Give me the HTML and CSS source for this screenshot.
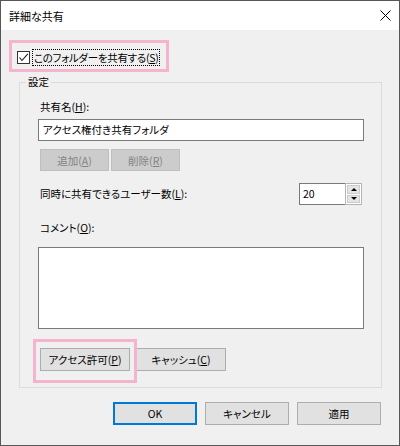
FILE: index.html
```html
<!DOCTYPE html>
<html lang="ja">
<head>
<meta charset="utf-8">
<title>詳細な共有</title>
<link rel="stylesheet" href="styles.css">
</head>
<body>
<div class="window">
  <div class="titlebar">
    <span class="title">詳細な共有</span>
    <span class="close"><svg width="11" height="11" viewBox="0 0 11 11"><path d="M0.5 0.5 L10.5 10.5 M10.5 0.5 L0.5 10.5" stroke="#000" stroke-width="1" fill="none"/></svg></span>
  </div>
  <div class="content">
    <div class="check-row">
      <span class="checkbox"><svg width="11" height="11" viewBox="0 0 11 11"><path d="M1.5 5.5 L4 8.5 L9.8 1.8" stroke="#1a1a1a" stroke-width="1.1" fill="none"/></svg></span>
      <span class="check-label">このフォルダーを共有する(<u>S</u>)</span>
      <span class="highlight hl-check"></span>
    </div>
    <fieldset class="group">
      <legend>設定</legend>
      <div class="label">共有名(<u>H</u>):</div>
      <div class="textbox">アクセス権付き共有フォルダ</div>
      <div class="btn-row small">
        <span class="btn disabled">追加(<u>A</u>)</span>
        <span class="btn disabled">削除(<u>R</u>)</span>
      </div>
      <div class="users-row">
        <span class="label">同時に共有できるユーザー数(<u>L</u>):</span>
        <div class="spin">
          <span class="spin-field">20</span>
          <span class="spin-btns">
            <span class="spin-btn"><span class="tri up"></span></span>
            <span class="spin-btn"><span class="tri down"></span></span>
          </span>
        </div>
      </div>
      <div class="label comment-label">コメント(<u>O</u>):</div>
      <div class="textarea"></div>
      <div class="btn-row perm">
        <span class="btn wide hl-wrap">アクセス許可(<u>P</u>)<span class="highlight hl-perm"></span></span>
        <span class="btn wide">キャッシュ(<u>C</u>)</span>
      </div>
    </fieldset>
    <div class="dialog-buttons">
      <span class="btn dlg default">OK</span>
      <span class="btn dlg">キャンセル</span>
      <span class="btn dlg">適用</span>
    </div>
  </div>
</div>
</body>
</html>
```
FILE: styles.css
```css
* { box-sizing: border-box; }
html, body { margin: 0; padding: 0; }
body {
  width: 400px;
  height: 446px;
  overflow: hidden;
  font-family: "Noto Sans CJK JP", "Yu Gothic UI", sans-serif;
  font-size: 10.5px;
  color: #000;
  font-feature-settings: "palt";
  background: #f0f0f0;
}
u { text-decoration-thickness: 1px; text-underline-offset: 1px; }
.window {
  width: 400px;
  height: 446px;
  border: 1px solid #575757;
  background: #f0f0f0;
  display: flex;
  flex-direction: column;
}
.titlebar {
  height: 29px;
  flex: none;
  background: #fff;
  display: flex;
  align-items: center;
  justify-content: space-between;
  padding: 0 8px 0 8px;
}
.title { line-height: 16px; font-size: 11px; }
.close { display: flex; width: 11px; height: 11px; }
.content {
  flex: 1;
  padding: 19px 0 0 16px;
  display: flex;
  flex-direction: column;
  align-items: flex-start;
}
.check-row {
  position: relative;
  display: flex;
  align-items: center;
  height: 16px;
}
.checkbox {
  width: 13px;
  height: 13px;
  border: 1px solid #333;
  background: #fff;
  display: flex;
  margin-right: 3px;
}
.check-label {
  line-height: 15px;
  outline: 1px dotted #000;
  outline-offset: 0;
  padding: 0 1px;
  letter-spacing: -0.3px;
}
.highlight {
  position: absolute;
  border: 3px solid #f5b4cd;
  pointer-events: none;
}
.hl-check { top: -9px; left: -8px; right: -10px; bottom: -7px; }
.group {
  margin: 9px 0 0 2px;
  width: 363px;
  min-width: 0;
  border: 1px solid #dcdcdc;
  padding: 9px 16px 16px 18px;
  display: flex;
  flex-direction: column;
  align-items: flex-start;
}
.group legend {
  margin-left: -12px;
  padding: 0 2px;
  line-height: 16px;
  font-size: 10.5px;
}
.label { line-height: 16px; padding-left: 2px; }
.textbox {
  margin-top: 4px;
  width: 326px;
  height: 22px;
  border: 1px solid #7a7a7a;
  background: #fff;
  padding-left: 4px;
  line-height: 20px;
}
.btn-row { display: flex; padding-left: 2px; }
.btn-row.small { margin-top: 8px; gap: 2px; }
.btn {
  display: flex;
  align-items: center;
  justify-content: center;
  height: 22px;
  border: 1px solid #adadad;
  background: #e1e1e1;
  white-space: nowrap;
}
.btn.disabled {
  width: 69px;
  background: #cccccc;
  border-color: #bfbfbf;
  color: #838383;
}
.users-row {
  margin-top: 12px;
  width: 326px;
  height: 22px;
  padding-right: 2px;
  display: flex;
  align-items: center;
  justify-content: space-between;
}
.spin { width: 63px; height: 22px; display: flex; }
.spin-field {
  flex: 1;
  background: #fff;
  border: 1px solid #7a7a7a;
  border-right: none;
  padding-left: 3px;
  line-height: 20px;
}
.spin-btns {
  width: 17px;
  border: 1px solid #b5b5b5;
  background: #fff;
  padding: 1px;
  display: flex;
  flex-direction: column;
  gap: 1px;
}
.spin-btn {
  flex: 1;
  background: #e5e5e5;
  border: 1px solid #cccccc;
  display: flex;
  align-items: center;
  justify-content: center;
}
.tri { width: 0; height: 0; border-left: 3px solid transparent; border-right: 3px solid transparent; }
.tri.up { border-bottom: 3px solid #000; }
.tri.down { border-top: 3px solid #000; }
.comment-label { margin-top: 15px; }
.textarea {
  margin-top: 11px;
  width: 326px;
  height: 82px;
  border: 1px solid #7a7a7a;
  background: #fff;
}
.btn-row.perm { margin-top: 19px; gap: 6px; }
.btn.wide { width: 90px; height: 23px; }
.hl-wrap { position: relative; }
.hl-perm { top: -10px; left: -8px; right: -8px; bottom: -13px; }
.dialog-buttons {
  align-self: flex-end;
  margin: 14px 18px 0 0;
  display: flex;
  gap: 8px;
}
.btn.dlg { width: 84px; height: 23px; }
.btn.default { border: 2px solid #0078d7; }
```
